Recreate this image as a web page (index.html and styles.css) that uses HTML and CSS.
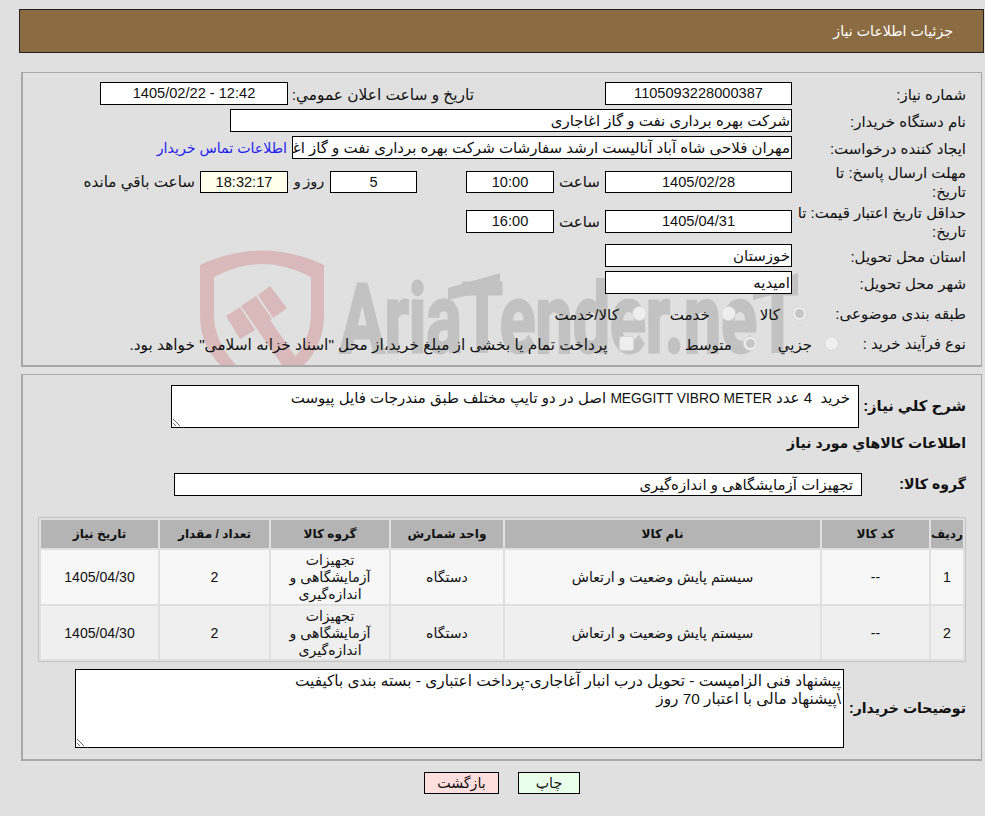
FILE: index.html
```html
<!DOCTYPE html>
<html lang="fa" dir="rtl">
<head>
<meta charset="utf-8">
<title>جزئیات اطلاعات نیاز</title>
<link rel="stylesheet" href="styles.css">
</head>
<body>
<header class="title-bar">جزئیات اطلاعات نیاز</header>

<section class="panel panel-top">
  <svg class="watermark" width="961" height="294" viewBox="0 0 961 294" aria-hidden="true">
    <g transform="translate(-23 -73)">
      <path class="wm-pink" fill-rule="evenodd" d="M200 265 Q262 236 324 265 V315 Q324 350 296 372 H228 Q200 350 200 315Z M214 277 V315 Q214 345 243 372 H281 Q311 345 311 315 V277 Q262 251 214 277Z"/>
      <path class="wm-pink" d="M226 316 L240 307 L255 330 L240 339Z M241 306 L256 296 L272 319 L257 329Z M258 295 L270 286 L287 308 L273 318Z M257 329 L270 320 L302 366 L289 375Z"/>
      <text x="340" y="352" class="wm-text" textLength="458" lengthAdjust="spacingAndGlyphs">AriaTender.neT</text>
      <path class="wm-gray" d="M448 288 L500 273 V288 L448 300Z M753 288 L798 273 V288 L753 300Z"/>
    </g>
  </svg>

  <div class="row row-1">
    <div class="label">شماره نیاز:</div>
    <div class="box box-md">1105093228000387</div>
    <div class="label-announce">تاريخ و ساعت اعلان عمومي:</div>
    <div class="box box-wide">12:42 - 1405/02/22</div>
  </div>
  <div class="row row-2">
    <div class="label">نام دستگاه خریدار:</div>
    <div class="box box-buyer start">شرکت بهره برداری نفت و گاز اغاجاری</div>
  </div>
  <div class="row row-3">
    <div class="label">ایجاد کننده درخواست:</div>
    <div class="box box-creator start">مهران فلاحی شاه آباد آنالیست ارشد سفارشات شرکت بهره برداری نفت و گاز اغاجاری</div>
    <a class="contact" href="#">اطلاعات تماس خریدار</a>
  </div>
  <div class="row row-4">
    <div class="label label-two">مهلت ارسال پاسخ: تا<br>تاریخ:</div>
    <div class="box box-md">1405/02/28</div>
    <div class="hour">ساعت</div>
    <div class="box box-sm">10:00</div>
    <div class="box box-days">5</div>
    <div class="days">روز و</div>
    <div class="box box-timer">18:32:17</div>
    <div class="remain">ساعت باقي مانده</div>
  </div>
  <div class="row row-5">
    <div class="label label-two">حداقل تاریخ اعتبار قیمت: تا<br>تاریخ:</div>
    <div class="box box-md">1405/04/31</div>
    <div class="hour">ساعت</div>
    <div class="box box-sm">16:00</div>
  </div>
  <div class="row row-6">
    <div class="label">استان محل تحویل:</div>
    <div class="box box-md start">خوزستان</div>
  </div>
  <div class="row row-7">
    <div class="label">شهر محل تحویل:</div>
    <div class="box box-md start">امیدیه</div>
  </div>
  <div class="row row-8">
    <div class="label label-subject">طبقه بندی موضوعی:</div>
    <div class="options">
      <span class="radio radio-on"></span><span class="opt-text t-a">کالا</span>
      <span class="radio"></span><span class="opt-text t-b">خدمت</span>
      <span class="radio"></span><span class="opt-text t-c">کالا/خدمت</span>
    </div>
  </div>
  <div class="row row-9">
    <div class="label label-process">نوع فرآیند خرید :</div>
    <div class="options">
      <span class="radio"></span><span class="opt-text t-d">جزیي</span>
      <span class="radio radio-on"></span><span class="opt-text t-e">متوسط</span>
      <span class="check"></span><span class="opt-text t-f">پرداخت تمام یا بخشی از مبلغ خرید،از محل "اسناد خزانه اسلامی" خواهد بود.</span>
    </div>
  </div>
</section>

<section class="panel panel-bottom">
  <div class="desc-row">
    <div class="strong-label label-desc">شرح کلي نیاز:</div>
    <div class="area area-desc">خرید  4 عدد <span class="latin">MEGGITT VIBRO METER</span> اصل در دو تایپ مختلف طبق مندرجات فایل پیوست</div>
  </div>
  <h2 class="strong-label section-title">اطلاعات کالاهاي مورد نیاز</h2>
  <div class="group-row">
    <div class="strong-label">گروه کالا:</div>
    <div class="box box-group start">تجهیزات آزمایشگاهی و اندازه‌گیری</div>
  </div>
  <table class="items">
    <colgroup>
      <col class="c1"><col class="c2"><col class="c3"><col class="c4"><col class="c5"><col class="c6"><col class="c7">
    </colgroup>
    <thead>
      <tr><th>ردیف</th><th>کد کالا</th><th>نام کالا</th><th>واحد شمارش</th><th>گروه کالا</th><th>تعداد / مقدار</th><th>تاریخ نیاز</th></tr>
    </thead>
    <tbody>
      <tr class="odd"><td>1</td><td>--</td><td>سیستم پایش وضعیت و ارتعاش</td><td>دستگاه</td><td>تجهیزات<br>آزمایشگاهی و<br>اندازه‌گیری</td><td>2</td><td>1405/04/30</td></tr>
      <tr class="even"><td>2</td><td>--</td><td>سیستم پایش وضعیت و ارتعاش</td><td>دستگاه</td><td>تجهیزات<br>آزمایشگاهی و<br>اندازه‌گیری</td><td>2</td><td>1405/04/30</td></tr>
    </tbody>
  </table>
  <div class="note-row">
    <div class="strong-label">توضیحات خریدار:</div>
    <textarea class="area area-note" readonly>پیشنهاد فنی الزامیست - تحویل درب انبار آغاجاری-پرداخت اعتباری - بسته بندی باکیفیت
\پیشنهاد مالی با اعتبار 70 روز</textarea>
  </div>
</section>

<div class="actions">
  <button class="btn btn-print" type="button">چاپ</button>
  <button class="btn btn-back" type="button">بازگشت</button>
</div>
</body>
</html>
```

FILE: styles.css
```css
* { box-sizing: border-box; }
html, body { margin: 0; height: 816px; overflow: hidden; }
body {
  background: #e0e0e0;
  color: #111;
  font: 14.6px/17px "Liberation Sans", "DejaVu Sans", sans-serif;
}
.title-bar {
  margin: 9px 1px 0 0;
  width: 965px;
  height: 44px;
  background: #8b6c42;
  border: 1px solid #222;
  color: #fff;
  padding: 0 30px 0 0;
  font-size: 14.2px;
  line-height: 42px;
}
.panel {
  position: relative;
  width: 961px;
  margin-right: 3px;
  border: 2px solid #a8a8a8;
  border-width: 1px 1px 2px 2px;
}
.panel-top { height: 295px; margin-top: 19px; padding: 9px 15px 0 0; overflow: hidden; }
.panel-bottom { height: 387px; margin-top: 7px; padding: 10px 15px 0 0; }
.watermark { position: absolute; top: 0; left: 0; pointer-events: none; }
.wm-pink { fill: #d9b9b9; }
.wm-gray { fill: #c2c2c2; }
.wm-text {
  direction: ltr;
  font: 700 97px Roboto, sans-serif;
  fill: #c2c2c2;
  stroke: #c2c2c2;
  stroke-width: 3px;
}

.row { position: relative; display: flex; align-items: center; height: 23px; margin-bottom: 4px; }
.row-4 { margin-top: 11px; margin-bottom: 17px; }
.row-4 .box { height: 22px; }
.row-5 { margin-bottom: 11px; }
.row-7 { margin-bottom: 8px; }
.row-8 { margin-bottom: 7px; }
.label { width: 174px; flex: none; white-space: nowrap; font-size: 15px; padding-top: 1px; }
.label-two { line-height: 19px; }
.label-subject { width: 159px; padding-top: 0; }
.label-process { width: 127px; padding-top: 0; }
.box {
  height: 23px;
  flex: none;
  background: #fff;
  border: 1px solid #000;
  text-align: center;
  line-height: 20px;
  white-space: nowrap;
  overflow: hidden;
}
.start { text-align: right; padding-right: 1px; font-size: 15px; line-height: 21px; }
.box-md { width: 187px; }
.box-wide { width: 188px; }
.box-buyer { width: 562px; }
.box-creator { width: 500px; }
.box-sm { width: 88px; }
.box-days { width: 87px; margin-right: 49px; }
.box-timer { width: 88px; background: #ffffee; }
.box-group { width: 688px; padding-right: 8px; }
.label-announce { flex: none; width: 317px; padding: 1px 131px 0 0; white-space: nowrap; font-size: 15.4px; }
.contact { color: #2222ee; font-size: 14.2px; text-decoration: none; margin-right: 5px; padding-top: 1px; white-space: nowrap; }
.hour { width: 51px; text-align: center; flex: none; font-size: 15px; }
.days { width: 42px; text-align: center; flex: none; word-spacing: -1.5px; }
.remain { margin-right: 5px; white-space: nowrap; font-size: 15.2px; }
.options { display: flex; align-items: center; }
.opt-text { white-space: nowrap; font-size: 15px; padding-top: 2px; }
.t-a { margin: 0 12px 0 24px; }
.t-b { margin: 0 11px 0 23px; }
.t-c { margin: 0 13px 0 0; }
.t-d { margin: 0 12px 0 20px; }
.t-e { margin: 0 11px 0 51px; }
.t-f { margin: 0 11px 0 0; font-size: 15.35px; }
.radio, .check {
  flex: none;
  width: 15px;
  height: 15px;
  background: #eeeeee;
  border: 1px solid #d6d6d6;
}
.radio { border-radius: 50%; position: relative; }
.check { border-radius: 3px; }
.radio-on::after {
  content: "";
  position: absolute;
  inset: 2px;
  border-radius: 50%;
  background: #c6c6c6;
}

.strong-label { font-weight: 700; font-size: 14.1px; margin: 0; white-space: nowrap; }
.label-desc { font-size: 14.8px; }
.desc-row { display: flex; align-items: center; height: 43px; }
.desc-row .strong-label { width: 107px; }
.area {
  display: block;
  flex: none;
  border: 1px solid #000;
  background: #fff;
  color: #111;
  font: inherit;
  outline: none;
  border-radius: 0;
}
.area-desc {
  width: 688px;
  height: 43px;
  padding: 3px 8px 2px 2px;
  font-size: 15px;
  white-space: pre-wrap;
  overflow: hidden;
  resize: both;
}
.latin { font-size: 13.8px; }
.section-title { margin-top: 7px; height: 17px; line-height: 17px; }
.group-row { display: flex; align-items: center; margin-top: 21px; height: 23px; }
.group-row .strong-label { width: 104px; }
.items {
  width: 928px;
  margin-top: 21px;
  border: 1px solid #c4c4c4;
  border-spacing: 2px;
  table-layout: fixed;
  text-align: center;
}
.c1 { width: 32px; } .c2 { width: 107px; } .c3 { width: 315px; } .c4 { width: 112px; }
.c5 { width: 118px; } .c6 { width: 109px; } .c7 { width: 117px; }
.items th { background: #b4b4b4; height: 28px; padding: 0; font-size: 12.1px; font-weight: 700; }
.items td { height: 54px; padding: 1px 0 0; font-size: 14.1px; }
.even td { height: 53px; background: #efefef; }
.odd td { background: #f7f7f7; }
.note-row { display: flex; align-items: center; margin-top: 7px; height: 79px; }
.note-row .strong-label { width: 122px; }
.area-note { width: 769px; height: 79px; padding: 2px; font-size: 15.35px; line-height: 18px; }
.actions { display: flex; justify-content: center; gap: 19px; margin-top: 11px; padding-left: 19px; }
.btn {
  width: 62px;
  height: 22px;
  padding: 1px 0 0;
  border: 1px solid #000;
  color: #111;
  font: inherit;
  font-size: 14.2px;
}
.btn-print { background: #eaffea; }
.btn-back { width: 75px; background: #ffdede; }
```
